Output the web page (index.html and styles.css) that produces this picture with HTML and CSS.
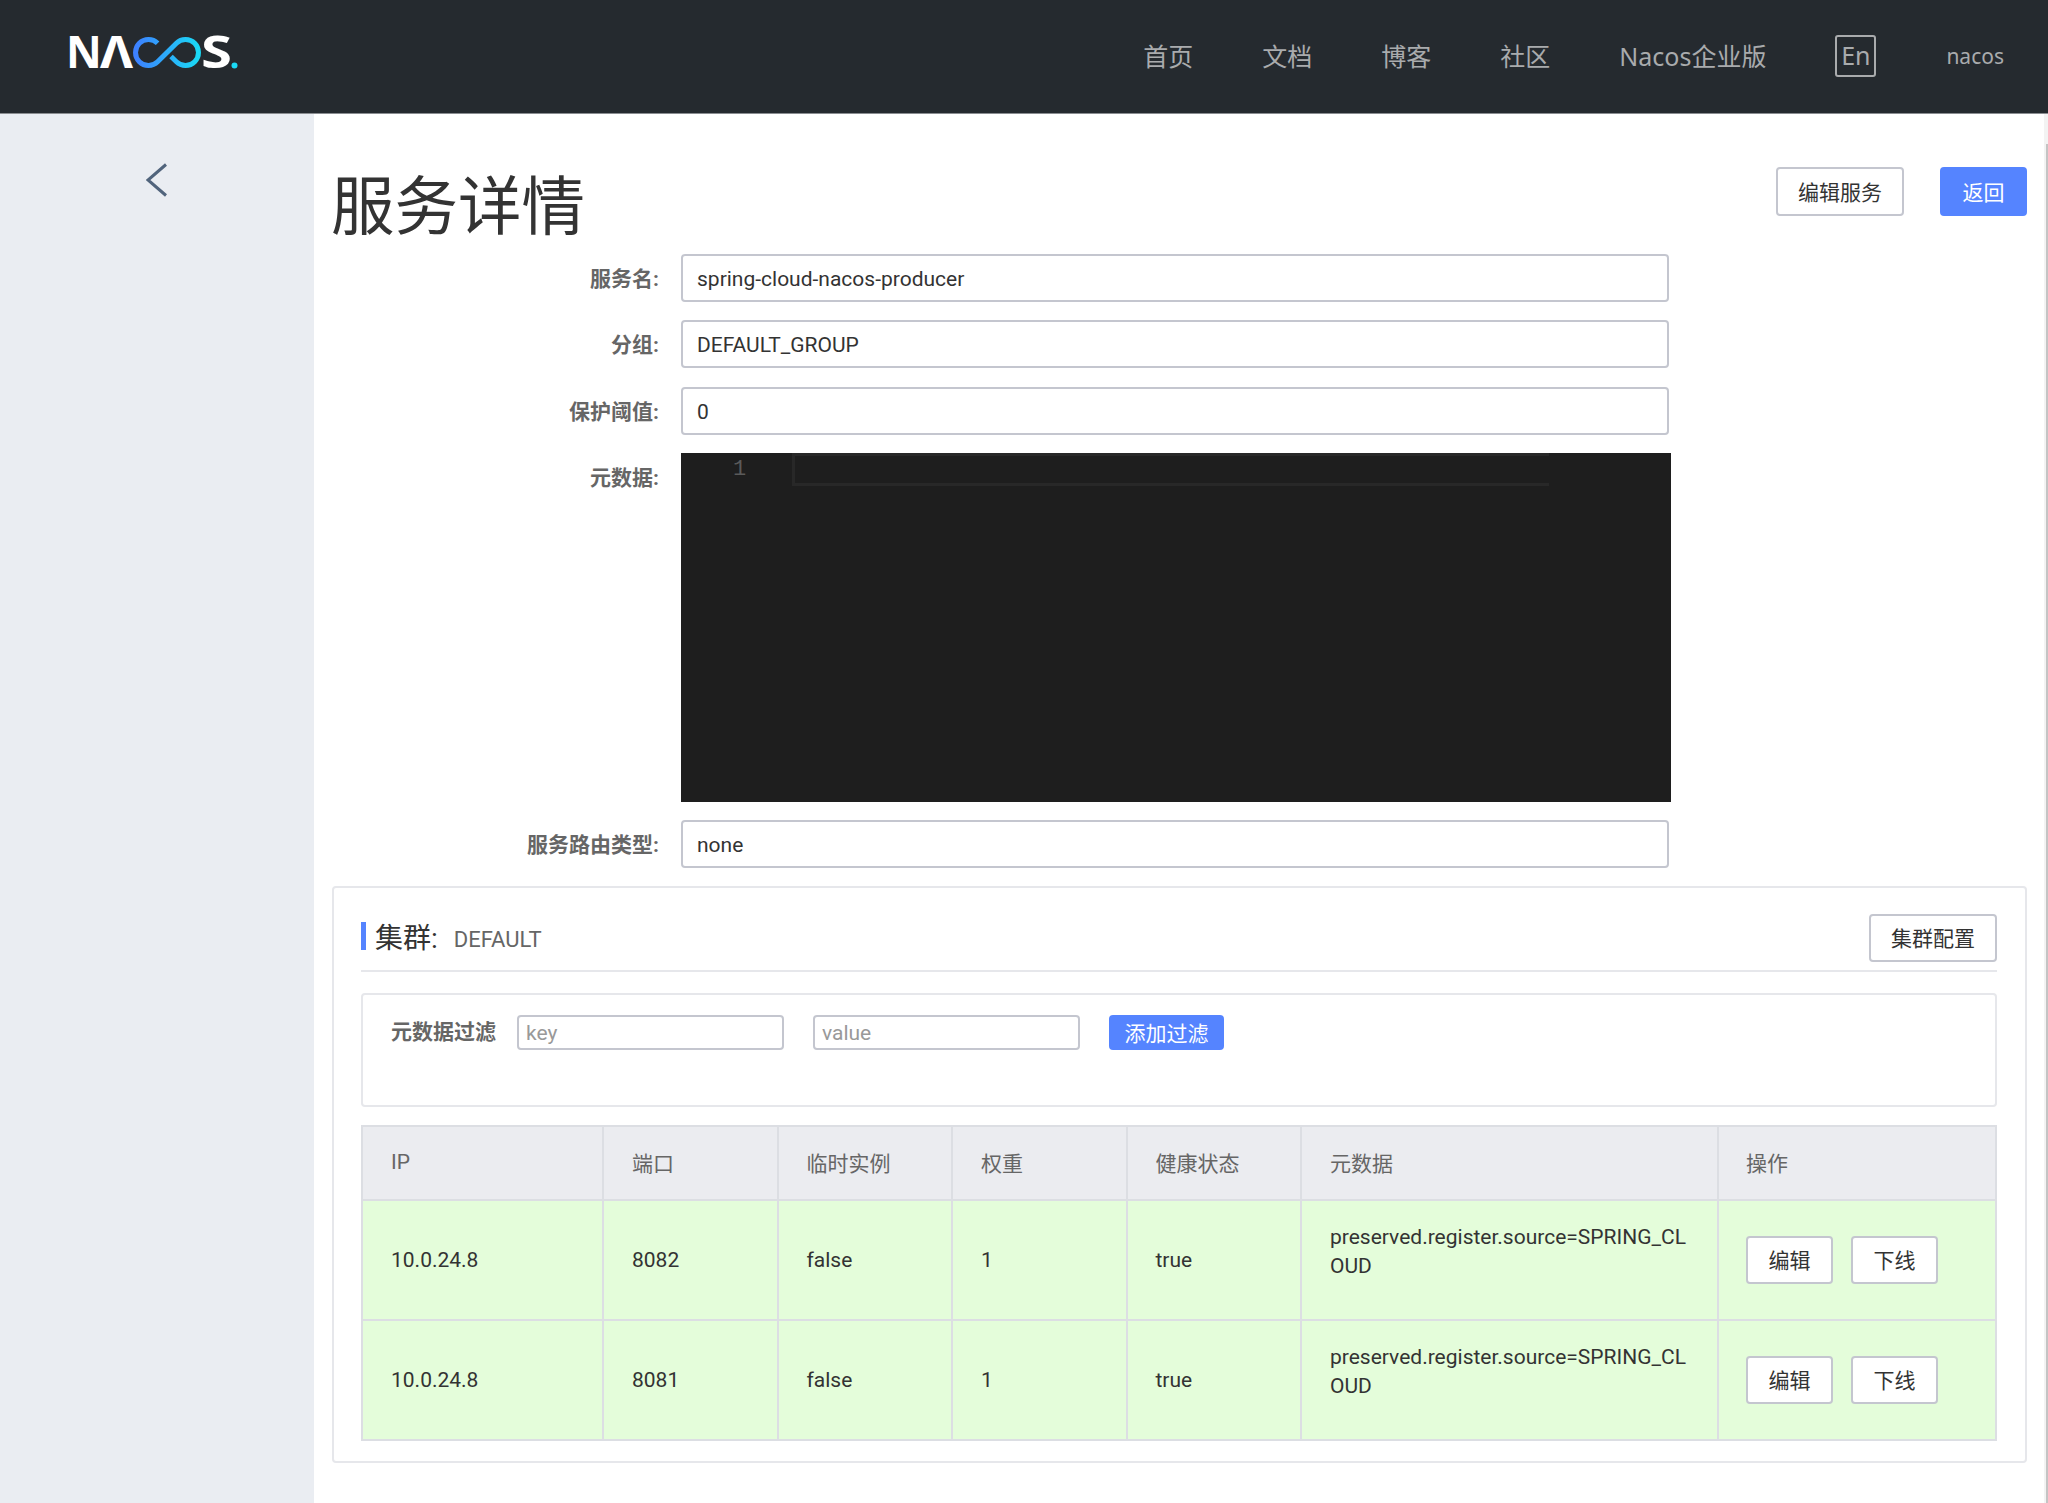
FILE: index.html
```html
<!DOCTYPE html>
<html lang="zh-CN">
<head>
    <meta charset="UTF-8">
    <title>Nacos - 服务详情</title>
    <link rel="stylesheet" href="styles.css">
</head>
<body>
    <header class="header">
        <svg class="logo" viewBox="0 0 180 60" role="img" aria-label="NACOS.">
            <defs>
                <linearGradient id="logoGrad" x1="0" x2="1" y1="0" y2="0">
                    <stop offset="0" stop-color="#3d80ff"/>
                    <stop offset="1" stop-color="#1ad9f5"/>
                </linearGradient>
            </defs>
            <text class="logo-text" x="2" y="47">N</text>
            <text class="logo-text" x="36" y="47" textLength="33" lengthAdjust="spacingAndGlyphs">Λ</text>
            <path d="M93.6 22.2 A13 13 0 1 0 93.6 40.8 L112.4 22.2 A13 13 0 1 1 112.4 40.8 L107 35.5" fill="none" stroke="url(#logoGrad)" stroke-width="5"/>
            <text class="logo-text" x="137" y="47" textLength="31" lengthAdjust="spacingAndGlyphs">S</text>
            <circle cx="170.5" cy="44.5" r="3" fill="#1ad9f5"/>
        </svg>
        <nav class="nav">
            <a class="nav-link">首页</a>
            <a class="nav-link">文档</a>
            <a class="nav-link">博客</a>
            <a class="nav-link">社区</a>
            <a class="nav-link">Nacos企业版</a>
            <a class="lang-btn">En</a>
            <a class="user-name">nacos</a>
        </nav>
    </header>

    <div class="layout">
        <aside class="sidebar">
            <svg class="collapse-icon" viewBox="0 0 22 34">
                <path d="M20 1.5 L2 17 L20 32.5" fill="none" stroke="#51647c" stroke-width="3"/>
            </svg>
        </aside>

        <main class="main">
            <div class="title-row">
                <h1 class="page-title">服务详情</h1>
                <div class="title-actions">
                    <button class="btn btn-edit">编辑服务</button>
                    <button class="btn btn-primary btn-back">返回</button>
                </div>
            </div>

            <div class="form-row">
                <label class="form-label">服务名:</label>
                <input class="form-input" value="spring-cloud-nacos-producer">
            </div>
            <div class="form-row">
                <label class="form-label">分组:</label>
                <input class="form-input" value="DEFAULT_GROUP">
            </div>
            <div class="form-row">
                <label class="form-label">保护阈值:</label>
                <input class="form-input" value="0">
            </div>
            <div class="form-row form-row-editor">
                <label class="form-label">元数据:</label>
                <div class="editor">
                    <span class="line-no">1</span>
                    <div class="current-line"></div>
                </div>
            </div>
            <div class="form-row">
                <label class="form-label">服务路由类型:</label>
                <input class="form-input" value="none">
            </div>

            <section class="cluster-card">
                <div class="cluster-head">
                    <div class="cluster-name">
                        <span class="cluster-label">集群:</span>
                        <span class="cluster-value">DEFAULT</span>
                    </div>
                    <button class="btn btn-config">集群配置</button>
                </div>

                <div class="filter-panel">
                    <span class="filter-label">元数据过滤</span>
                    <input class="filter-input" placeholder="key">
                    <input class="filter-input" placeholder="value">
                    <button class="btn btn-primary btn-add">添加过滤</button>
                </div>

                <table class="instance-table">
                    <colgroup>
                        <col class="col-ip">
                        <col class="col-std">
                        <col class="col-std">
                        <col class="col-std">
                        <col class="col-std">
                        <col class="col-meta">
                        <col>
                    </colgroup>
                    <thead>
                        <tr>
                            <th>IP</th>
                            <th>端口</th>
                            <th>临时实例</th>
                            <th>权重</th>
                            <th>健康状态</th>
                            <th>元数据</th>
                            <th>操作</th>
                        </tr>
                    </thead>
                    <tbody>
                        <tr>
                            <td>10.0.24.8</td>
                            <td>8082</td>
                            <td>false</td>
                            <td>1</td>
                            <td>true</td>
                            <td class="cell-meta">preserved.register.source=SPRING_CLOUD</td>
                            <td>
                                <div class="row-actions">
                                    <button class="btn btn-row">编辑</button>
                                    <button class="btn btn-row">下线</button>
                                </div>
                            </td>
                        </tr>
                        <tr>
                            <td>10.0.24.8</td>
                            <td>8081</td>
                            <td>false</td>
                            <td>1</td>
                            <td>true</td>
                            <td class="cell-meta">preserved.register.source=SPRING_CLOUD</td>
                            <td>
                                <div class="row-actions">
                                    <button class="btn btn-row">编辑</button>
                                    <button class="btn btn-row">下线</button>
                                </div>
                            </td>
                        </tr>
                    </tbody>
                </table>
            </section>
        </main>

        <div class="scrollbar">
            <div class="scrollbar-thumb"></div>
        </div>
    </div>
</body>
</html>
```

FILE: styles.css
```css
* {
    box-sizing: border-box;
}

body, html {
    margin: 0;
    padding: 0;
    height: 100%;
    overflow: hidden;
    font-family: Roboto, "Noto Sans CJK SC", sans-serif;
    font-size: 21px;
    color: #333;
    background: #fff;
}

/* Kopfzeile */
.header {
    height: 114px;
    background: #252a2f;
    border-bottom: 1px solid #8a8d91;
    display: flex;
    justify-content: space-between;
    padding: 21px 44px 0 64px;
}

.logo {
    width: 180px;
    height: 60px;
}

.logo-text {
    font-family: "Noto Sans", sans-serif;
    font-size: 44px;
    font-weight: 700;
    fill: #fff;
}

.nav {
    display: flex;
    align-items: flex-start;
    padding-top: 15px;
    color: #a9abad;
    font-family: "Noto Sans", "Noto Sans CJK SC", sans-serif;
    font-size: 25px;
}

.nav-link {
    margin-right: 69px;
    line-height: 40px;
}

.lang-btn {
    width: 41px;
    height: 42px;
    margin-top: -1px;
    border: 2px solid #a9abad;
    border-radius: 3px;
    text-align: center;
    line-height: 36px;
}

.user-name {
    margin-left: 70px;
    font-size: 21px;
    line-height: 40px;
}

/* Seitenaufbau */
.layout {
    display: flex;
    height: 1389px;
}

.sidebar {
    width: 314px;
    flex-shrink: 0;
    background: #eaedf2;
    padding: 49px 0 0 146px;
}

.collapse-icon {
    display: block;
    width: 22px;
    height: 34px;
}

.main {
    flex: 1;
    min-width: 0;
    padding: 53px 17px 0 18px;
}

.scrollbar {
    width: 4px;
    flex-shrink: 0;
    background: #f3f3f3;
    padding: 30px 0 0 2px;
}

.scrollbar-thumb {
    height: 100%;
    background: #c4c4c4;
}

.title-row {
    display: flex;
    justify-content: space-between;
    height: 87px;
}

.page-title {
    margin: 0 0 0 -1px;
    font-family: "Noto Sans CJK SC", sans-serif;
    font-size: 63.5px;
    font-weight: 400;
    line-height: 68px;
}

.title-actions {
    display: flex;
    gap: 36px;
}

/* Buttons */
.btn {
    font-family: inherit;
    font-size: 21px;
    color: #333;
    background: #fff;
    border: 2px solid #c4c6cf;
    border-radius: 4px;
    height: 48px;
    padding: 0 0 2px;
}

.btn-primary {
    background: #5584ff;
    border-color: #5584ff;
    color: #fff;
}

.btn-edit {
    width: 128px;
    height: 49px;
}

.btn-back {
    width: 87px;
    height: 49px;
}

.btn-config {
    width: 128px;
}

.btn-add {
    width: 115px;
    height: 35px;
}

.btn-row {
    width: 87px;
}

/* Formular */
.form-row {
    display: flex;
    margin-bottom: 18.3px;
}

.form-row-editor {
    margin-bottom: 18px;
}

.form-label {
    width: 349px;
    height: 48px;
    padding-right: 22px;
    text-align: right;
    font-weight: 700;
    color: #666;
    line-height: 50px;
}

.form-input {
    width: 988px;
    height: 48px;
    padding: 2px 14px 0;
    border: 2px solid #c4c6cf;
    border-radius: 4px;
    font-family: inherit;
    font-size: 21px;
    color: #333;
}

.editor {
    position: relative;
    width: 990px;
    height: 349px;
    background: #1e1e1e;
}

.line-no {
    position: absolute;
    left: 52px;
    top: 0;
    font-family: "Liberation Mono", monospace;
    font-size: 22px;
    line-height: 34px;
    color: #5a5a5a;
}

.current-line {
    position: absolute;
    left: 111px;
    top: 0;
    width: 757px;
    height: 33px;
    border: 3px solid #282828;
    border-right: 0;
}

/* Cluster-Karte */
.cluster-card {
    border: 2px solid #e6e7eb;
    border-radius: 4px;
    height: 577px;
    padding: 26px 28px 0 27px;
}

.cluster-head {
    display: flex;
    justify-content: space-between;
    align-items: center;
    padding-bottom: 8px;
    border-bottom: 2px solid #e6e7eb;
    margin-bottom: 21px;
}

.cluster-name {
    display: flex;
    align-items: center;
    border-left: 5px solid #5584ff;
    height: 28px;
    margin-bottom: 4px;
    padding-left: 9px;
}

.cluster-label {
    font-size: 28px;
    margin-right: 16px;
}

.cluster-value {
    color: #666;
    font-size: 22px;
    padding-top: 6px;
}

.filter-panel {
    display: flex;
    align-items: flex-start;
    height: 114px;
    padding: 20px 28px 0;
    border: 2px solid #e6e7eb;
    border-radius: 4px;
    margin-bottom: 18px;
}

.filter-label {
    font-weight: 700;
    color: #666;
    line-height: 35px;
    margin-right: 21px;
}

.filter-input {
    width: 267px;
    height: 35px;
    margin-right: 29px;
    padding: 0 7px;
    border: 2px solid #c4c6cf;
    border-radius: 4px;
    font-family: inherit;
    font-size: 21px;
}

.filter-input::placeholder {
    color: #999;
}

/* Tabelle */
.instance-table {
    width: 100%;
    table-layout: fixed;
    border-collapse: collapse;
    border: 2px solid #dcdee3;
}

.col-ip {
    width: 241px;
}

.col-std {
    width: 174.5px;
}

.col-meta {
    width: 417px;
}

.instance-table th,
.instance-table td {
    border: 2px solid #dcdee3;
    padding: 0 28px;
    text-align: left;
    font-weight: 400;
    vertical-align: middle;
}

.instance-table th {
    height: 74px;
    padding-bottom: 2px;
    background: #ebecf0;
    color: #666;
}

.instance-table td {
    height: 120px;
    background: #e4fdda;
    color: #333;
}

.instance-table tr > :last-child {
    padding-left: 27px;
}

.instance-table td.cell-meta {
    vertical-align: top;
    padding-top: 22px;
    line-height: 29px;
    word-break: break-all;
}

.row-actions {
    display: flex;
    gap: 18px;
}
```
